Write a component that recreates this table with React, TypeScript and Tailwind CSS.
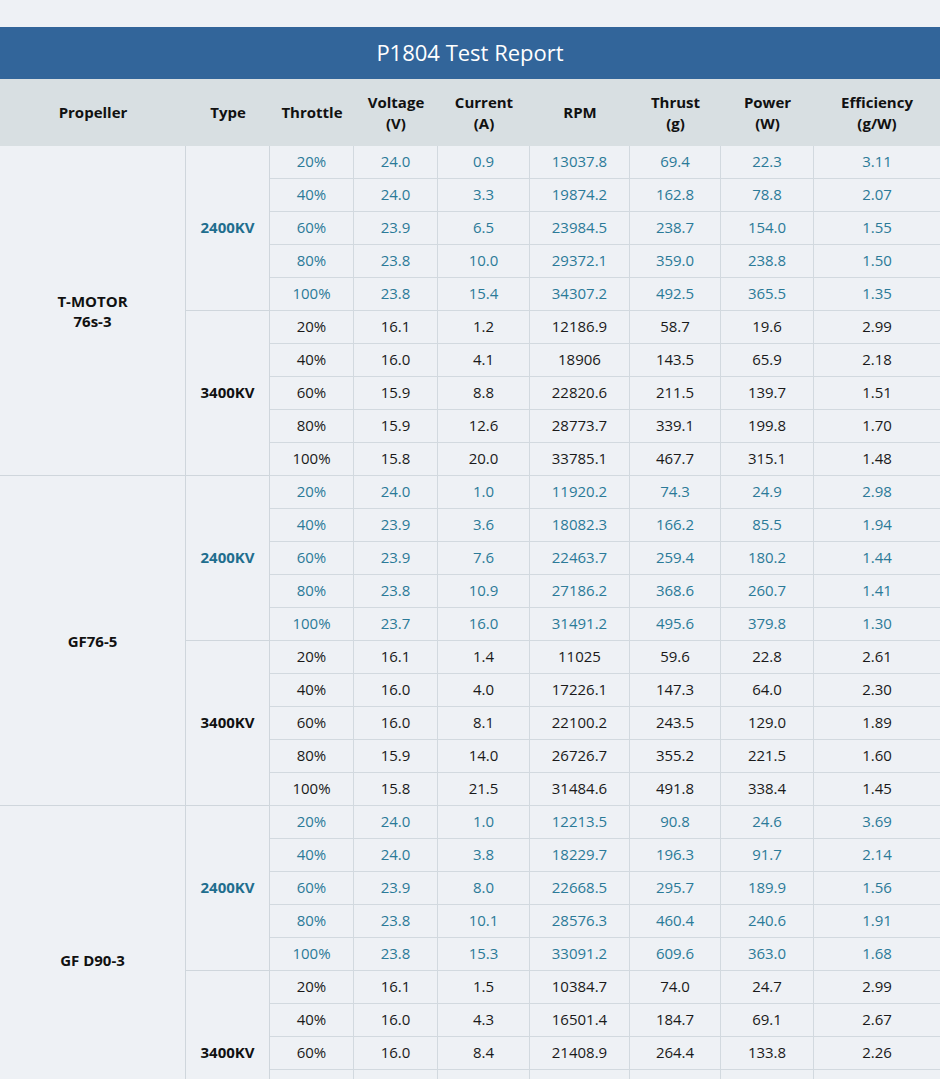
const FONT = "font-['Open_Sans','Noto_Sans',sans-serif]";

type Row = [string, string, string, string, string, string, string];

type Group = {
  propeller: string[];
  kv: { type: string; blue: boolean; rows: Row[] }[];
  lift?: boolean;
};

const groups: Group[] = [
  {
    propeller: ["T-MOTOR", "76s-3"],
    kv: [
      {
        type: "2400KV",
        blue: true,
        rows: [
          ["20%", "24.0", "0.9", "13037.8", "69.4", "22.3", "3.11"],
          ["40%", "24.0", "3.3", "19874.2", "162.8", "78.8", "2.07"],
          ["60%", "23.9", "6.5", "23984.5", "238.7", "154.0", "1.55"],
          ["80%", "23.8", "10.0", "29372.1", "359.0", "238.8", "1.50"],
          ["100%", "23.8", "15.4", "34307.2", "492.5", "365.5", "1.35"],
        ],
      },
      {
        type: "3400KV",
        blue: false,
        rows: [
          ["20%", "16.1", "1.2", "12186.9", "58.7", "19.6", "2.99"],
          ["40%", "16.0", "4.1", "18906", "143.5", "65.9", "2.18"],
          ["60%", "15.9", "8.8", "22820.6", "211.5", "139.7", "1.51"],
          ["80%", "15.9", "12.6", "28773.7", "339.1", "199.8", "1.70"],
          ["100%", "15.8", "20.0", "33785.1", "467.7", "315.1", "1.48"],
        ],
      },
    ],
  },
  {
    propeller: ["GF76-5"],
    kv: [
      {
        type: "2400KV",
        blue: true,
        rows: [
          ["20%", "24.0", "1.0", "11920.2", "74.3", "24.9", "2.98"],
          ["40%", "23.9", "3.6", "18082.3", "166.2", "85.5", "1.94"],
          ["60%", "23.9", "7.6", "22463.7", "259.4", "180.2", "1.44"],
          ["80%", "23.8", "10.9", "27186.2", "368.6", "260.7", "1.41"],
          ["100%", "23.7", "16.0", "31491.2", "495.6", "379.8", "1.30"],
        ],
      },
      {
        type: "3400KV",
        blue: false,
        rows: [
          ["20%", "16.1", "1.4", "11025", "59.6", "22.8", "2.61"],
          ["40%", "16.0", "4.0", "17226.1", "147.3", "64.0", "2.30"],
          ["60%", "16.0", "8.1", "22100.2", "243.5", "129.0", "1.89"],
          ["80%", "15.9", "14.0", "26726.7", "355.2", "221.5", "1.60"],
          ["100%", "15.8", "21.5", "31484.6", "491.8", "338.4", "1.45"],
        ],
      },
    ],
  },
  {
    propeller: ["GF D90-3"],
    lift: true,
    kv: [
      {
        type: "2400KV",
        blue: true,
        rows: [
          ["20%", "24.0", "1.0", "12213.5", "90.8", "24.6", "3.69"],
          ["40%", "24.0", "3.8", "18229.7", "196.3", "91.7", "2.14"],
          ["60%", "23.9", "8.0", "22668.5", "295.7", "189.9", "1.56"],
          ["80%", "23.8", "10.1", "28576.3", "460.4", "240.6", "1.91"],
          ["100%", "23.8", "15.3", "33091.2", "609.6", "363.0", "1.68"],
        ],
      },
      {
        type: "3400KV",
        blue: false,
        rows: [
          ["20%", "16.1", "1.5", "10384.7", "74.0", "24.7", "2.99"],
          ["40%", "16.0", "4.3", "16501.4", "184.7", "69.1", "2.67"],
          ["60%", "16.0", "8.4", "21408.9", "264.4", "133.8", "2.26"],
          ["80%", "15.9", "12.3", "27311.5", "401.6", "210.2", "1.91"],
          ["100%", "15.8", "19.6", "32016.3", "552.1", "330.0", "1.67"],
        ],
      },
    ],
  },
];

const headers: string[][] = [
  ["Propeller"],
  ["Type"],
  ["Throttle"],
  ["Voltage", "(V)"],
  ["Current", "(A)"],
  ["RPM"],
  ["Thrust", "(g)"],
  ["Power", "(W)"],
  ["Efficiency", "(g/W)"],
];

const widths = ["w-[186px]", "w-[84px]", "w-[84px]", "w-[84px]", "w-[92px]", "w-[100px]", "w-[91px]", "w-[93px]", "w-[126px]"];

export default function App() {
  return (
    <div className={`w-[940px] h-[1079px] overflow-hidden bg-[#eef1f5] ${FONT}`}>
      <div className="h-[27px] bg-[#eef1f5]" />
      <div className="h-[52px] bg-[#32659a] flex items-center justify-center text-white text-[22px] pb-[1px]">
        P1804 Test Report
      </div>
      <table className="w-[940px] table-fixed border-separate border-spacing-0 text-[15px]">
        <colgroup>
          {widths.map((w, i) => (
            <col key={i} className={w} />
          ))}
        </colgroup>
        <thead>
          <tr className="bg-[#d8dfe2]">
            {headers.map((h, i) => (
              <th key={i} className="h-[67px] font-bold text-[#111] leading-[21px] text-center align-middle p-0">
                {h.map((l, j) => (
                  <div key={j}>{l}</div>
                ))}
              </th>
            ))}
          </tr>
        </thead>
        <tbody>
          {groups.map((g, gi) =>
            g.kv.map((k, ki) =>
              k.rows.map((r, ri) => (
                <tr key={`${gi}-${ki}-${ri}`}>
                  {ki === 0 && ri === 0 && (
                    <td
                      rowSpan={10}
                      className={`border-r border-b border-[#cfd6dc] text-center align-middle font-bold text-[#111] leading-[20px] p-0 ${g.lift ? "pb-[22px]" : ""}`}
                    >
                      {g.propeller.map((l, j) => (
                        <div key={j}>{l}</div>
                      ))}
                    </td>
                  )}
                  {ri === 0 && (
                    <td
                      rowSpan={5}
                      className={`border-r border-b border-[#cfd6dc] text-center align-middle font-bold p-0 pb-[2px] ${k.blue ? "text-[#1f6e8e]" : "text-[#111]"}`}
                    >
                      {k.type}
                    </td>
                  )}
                  {r.map((v, vi) => (
                    <td
                      key={vi}
                      className={`h-[33px] border-b border-[#d2d9df] text-center align-middle p-0 pb-[2px] leading-[20px] ${vi === 6 ? "" : "border-r"} ${k.blue ? "text-[#2b7a98]" : "text-[#1a1a1a]"}`}
                    >
                      {v}
                    </td>
                  ))}
                </tr>
              ))
            )
          )}
        </tbody>
      </table>
    </div>
  );
}
